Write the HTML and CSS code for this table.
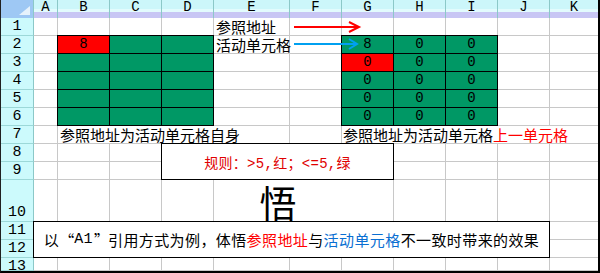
FILE: index.html
```html
<!DOCTYPE html>
<html lang="zh-CN">
<head>
<meta charset="utf-8">
<title>参照地址与活动单元格</title>
<link rel="stylesheet" href="styles.css">
</head>
<body>
<div class="sheet">
  <div class="layer bg">
    <div class="corner"><span class="tri"></span></div><div class="ch">A</div><div class="ch">B</div><div class="ch">C</div><div class="ch">D</div><div class="ch">E</div><div class="ch">F</div><div class="ch">G</div><div class="ch">H</div><div class="ch">I</div><div class="ch">J</div><div class="ch last">K</div>
    <div class="rh">1</div><i></i><i></i><i></i><i></i><i></i><i></i><i></i><i></i><i></i><i></i><i class="last"></i>
    <div class="rh">2</div><i></i><i></i><i></i><i></i><i></i><i></i><i></i><i></i><i></i><i></i><i class="last"></i>
    <div class="rh">3</div><i></i><i></i><i></i><i></i><i></i><i></i><i></i><i></i><i></i><i></i><i class="last"></i>
    <div class="rh">4</div><i></i><i></i><i></i><i></i><i></i><i></i><i></i><i></i><i></i><i></i><i class="last"></i>
    <div class="rh">5</div><i></i><i></i><i></i><i></i><i></i><i></i><i></i><i></i><i></i><i></i><i class="last"></i>
    <div class="rh">6</div><i></i><i></i><i></i><i></i><i></i><i></i><i></i><i></i><i></i><i></i><i class="last"></i>
    <div class="rh">7</div><i></i><i></i><i></i><i></i><i></i><i></i><i></i><i></i><i></i><i></i><i class="last"></i>
    <div class="rh">8</div><i></i><i></i><i></i><i></i><i></i><i></i><i></i><i></i><i></i><i></i><i class="last"></i>
    <div class="rh">9</div><i></i><i></i><i></i><i></i><i></i><i></i><i></i><i></i><i></i><i></i><i class="last"></i>
    <div class="rh bottom">10</div><i></i><i></i><i></i><i></i><i></i><i></i><i></i><i></i><i></i><i></i><i class="last"></i>
    <div class="rh">11</div><i></i><i></i><i></i><i></i><i></i><i></i><i></i><i></i><i></i><i></i><i class="last"></i>
    <div class="rh">12</div><i></i><i></i><i></i><i></i><i></i><i></i><i></i><i></i><i></i><i></i><i class="last"></i>
    <div class="rh">13</div><i></i><i></i><i></i><i></i><i></i><i></i><i></i><i></i><i></i><i></i><i class="last"></i>
  </div>

  <div class="layer fg">
    <div class="label e1">参照地址</div>
    <div class="label e2">活动单元格</div>

    <svg class="arrows" width="103" height="36" viewBox="0 0 103 36">
      <line x1="5" y1="9" x2="69" y2="9" stroke="#ff0000" stroke-width="2"/>
      <polyline points="60,4 70,9 60,14" fill="none" stroke="#ff0000" stroke-width="2"/>
      <line x1="5" y1="26" x2="67" y2="26" stroke="#00a0f0" stroke-width="2"/>
      <polyline points="60,21 68,26 60,31" fill="none" stroke="#00a0f0" stroke-width="2"/>
    </svg>

    <div class="block left">
      <div class="c red">8</div><div class="c"></div><div class="c"></div>
      <div class="c"></div><div class="c"></div><div class="c"></div>
      <div class="c"></div><div class="c"></div><div class="c"></div>
      <div class="c"></div><div class="c"></div><div class="c"></div>
      <div class="c"></div><div class="c"></div><div class="c"></div>
    </div>

    <div class="block right">
      <div class="c">8</div><div class="c">0</div><div class="c">0</div>
      <div class="c red">0</div><div class="c">0</div><div class="c">0</div>
      <div class="c">0</div><div class="c">0</div><div class="c">0</div>
      <div class="c">0</div><div class="c">0</div><div class="c">0</div>
      <div class="c">0</div><div class="c">0</div><div class="c">0</div>
    </div>

    <div class="label over b7">参照地址为活动单元格自身</div>
    <div class="label over g7">参照地址为活动单元格<span class="red-t">上一单元格</span></div>

    <div class="box rule">规则：&gt;5,红；&lt;=5,绿</div>

    <div class="wu">悟</div>

    <div class="box note">以<span class="q open">“</span>A1<span class="q close">”</span>引用方式为例，体悟<span class="red-t">参照地址</span>与<span class="blue-t">活动单元格</span>不一致时带来的效果</div>
  </div>
</div>
</body>
</html>
```

FILE: styles.css
```css
html, body {
  margin: 0;
  padding: 0;
  background: #ffffff;
}

.sheet {
  width: 600px;
  height: 273px;
  box-sizing: border-box;
  border-left: 1px solid #202020;
  border-right: 2px solid #000000;
  border-bottom: 2px solid #000000;
  display: grid;
  overflow: hidden;
  font-family: "Noto Sans CJK SC", "Noto Sans", sans-serif;
  color: #000;
}

.layer {
  grid-area: 1 / 1;
  display: grid;
  grid-template-columns: 33px 24px 52px 52px 52px 76px 52px 52px 52px 52px 52px 48px;
  grid-template-rows: 18px repeat(9, 18px) 42px 18px 18px 13px;
}

/* background grid */
.bg i {
  display: block;
  box-sizing: border-box;
  border-right: 1px solid #c8c8c8;
  border-bottom: 1px solid #c8c8c8;
}
.bg i.last { border-right: none; }

.corner {
  position: relative;
  background: #9ec8f4;
  border-right: 1px solid #8cc8c8;
  box-sizing: border-box;
}
.corner .tri {
  position: absolute;
  right: 3px;
  bottom: 3px;
  width: 0;
  height: 0;
  border-left: 11px solid transparent;
  border-bottom: 9px solid #e6f2fc;
}

.ch {
  box-sizing: border-box;
  background: linear-gradient(to bottom, #ccf6fa 0, #ccf6fa 9px, #e2fbfd 9px, #e2fbfd 12px, #c8c6f4 12px, #c8c6f4 18px);
  border-right: 1px solid #8cc8c8;
  font-family: "Liberation Mono", monospace;
  font-size: 14px;
  line-height: 15px;
  text-align: center;
  color: #000;
}
.ch.last { border-right: none; }

.rh {
  box-sizing: border-box;
  background: #ccfafc;
  border-right: 1px solid #8cc8c8;
  border-bottom: 1px solid #9cd8d8;
  font-family: "Liberation Mono", monospace;
  font-size: 15px;
  line-height: 17px;
  text-align: center;
  color: #000;
}
.rh.bottom {
  display: flex;
  align-items: flex-end;
  justify-content: center;
}

/* foreground overlays */
.label {
  font-size: 15px;
  line-height: 17px;
  padding-left: 2px;
  white-space: nowrap;
  z-index: 2;
}
.e1 { grid-column: 6 / 7; grid-row: 2 / 3; }
.e2 { grid-column: 6 / 7; grid-row: 3 / 4; }

.over {
  background: #fff;
  margin-bottom: 1px;
}
.b7 { grid-column: 3 / 6; grid-row: 8 / 9; }
.g7 { grid-column: 8 / 13; grid-row: 8 / 9; padding-left: 1px; }

.red-t { color: #ff0000; }
.blue-t { color: #0a6fd2; }

.arrows {
  grid-column: 7 / 9;
  grid-row: 2 / 4;
  margin-left: -1px;
  z-index: 3;
}

.block {
  grid-row: 3 / 8;
  margin: -1px 0 0 -1px;
  display: grid;
  grid-template-columns: repeat(3, 52px);
  grid-template-rows: repeat(5, 18px);
  border-left: 1px solid #000;
  border-top: 1px solid #000;
  z-index: 1;
}
.block.left { grid-column: 3 / 6; }
.block.right { grid-column: 8 / 11; }

.c {
  box-sizing: border-box;
  background: #009865;
  border-right: 1px solid #000;
  border-bottom: 1px solid #000;
  font-family: "Liberation Mono", monospace;
  font-size: 14px;
  line-height: 17px;
  text-align: center;
  color: #000;
}
.c.red { background: #ff0000; }

.box {
  background: #fff;
  border: 1px solid #000;
  margin: -1px 0 0 -1px;
  display: flex;
  align-items: center;
  justify-content: center;
  white-space: nowrap;
  z-index: 2;
}
.rule {
  grid-column: 5 / 9;
  grid-row: 9 / 11;
  color: #e00000;
  font-family: "Liberation Mono", "Noto Sans CJK SC", monospace;
  font-size: 14px;
  letter-spacing: 0.3px;
}
.note {
  grid-column: 2 / 12;
  grid-row: 12 / 14;
  font-family: "Liberation Mono", "Noto Sans CJK SC", monospace;
  font-size: 15px;
  letter-spacing: 0.4px;
}
.q {
  display: inline-block;
  width: 15px;
  font-family: "Noto Sans CJK SC", sans-serif;
  box-sizing: border-box;
}
.q.open { text-align: right; padding-right: 1px; }
.q.close { text-align: left; padding-left: 1px; }

.wu {
  grid-column: 6 / 8;
  grid-row: 11 / 12;
  background: #fff;
  display: flex;
  align-items: flex-end;
  justify-content: center;
  font-size: 37px;
  line-height: 40px;
  z-index: 1;
}
```
